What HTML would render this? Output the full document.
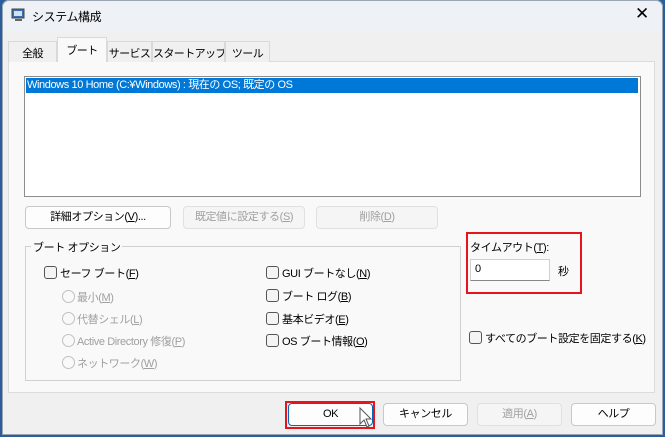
<!DOCTYPE html>
<html><head><meta charset="utf-8"><style>
*{box-sizing:border-box;margin:0;padding:0}
body{width:665px;height:437px;background:#2a5d9a;position:relative;overflow:hidden;font-family:"Liberation Sans","Noto Sans CJK JP",sans-serif;font-size:11px;letter-spacing:-0.4px;color:#000}
.win{position:absolute;left:2px;top:0;width:661px;height:435px;background:#f0f0f0;border-radius:7px 7px 0 0;box-shadow:inset 0 0 0 1px #9aa5b3}
.title{position:absolute;left:3px;top:1px;width:659px;height:31px;background:#eef2f6;border-radius:7px 7px 0 0}
.a{position:absolute;white-space:nowrap}
.panel{position:absolute;left:8px;top:61px;width:647px;height:332px;background:#f9f9f9;border:1px solid #dcdcdc}
.tab{position:absolute;top:41px;height:21px;border:1px solid #d9d9d9;border-bottom:none;background:#f0f0f0;padding:3px 0 0;text-align:center;white-space:nowrap;font-size:11px;letter-spacing:-0.6px;overflow:hidden}
.btn{position:absolute;height:23px;border:1px solid #c8c8c8;border-radius:4px;background:#fdfdfd;text-align:center;line-height:21px;white-space:nowrap}
.dis{color:#a0a0a0;background:#f5f5f5;border-color:#e0e0e0}
.cb{position:absolute;width:13px;height:13px;border:1px solid #555;border-radius:3px;background:#f4f4f4}
.rb{position:absolute;width:13px;height:13px;border:1px solid #c0c0c0;border-radius:50%}
.g{color:#a0a0a0}
u{text-decoration:underline}
</style></head><body>
<div class="win"></div>
<div class="title"></div>
<svg class="a" style="left:10px;top:7px" width="16" height="16" viewBox="0 0 16 16"><rect x="2" y="2" width="12" height="9" fill="#3a6fb0" stroke="#444"/><rect x="4" y="4" width="8" height="5" fill="#cfe3f7"/><rect x="5" y="12" width="7" height="2" fill="#666"/></svg>
<div class="a" style="left:32px;top:8px;font-size:12px">システム構成</div>
<div class="a" style="left:635px;top:4px;font-size:17px;font-weight:300">✕</div>
<div class="panel"></div>
<div class="tab" style="left:8px;width:49px">全般</div>
<div class="tab" style="left:57px;top:37px;height:25px;width:50px;background:#f9f9f9;padding-top:4px">ブート</div>
<div class="tab" style="left:107px;width:45px">サービス</div>
<div class="tab" style="left:152px;width:73px">スタートアップ</div>
<div class="tab" style="left:225px;width:45px">ツール</div>
<div class="a" style="left:24px;top:76px;width:617px;height:121px;background:#fff;border:1px solid #8c8c8c"></div>
<div class="a" style="left:26px;top:78px;width:612px;height:15px;background:#0078d7;color:#fff;padding-left:1px;line-height:15px">Windows 10 Home (C:¥Windows) : 現在の OS; 既定の OS</div>
<div class="btn" style="left:25px;top:206px;width:146px">詳細オプション(<u>V</u>)...</div>
<div class="btn dis" style="left:183px;top:206px;width:122px">既定値に設定する(<u>S</u>)</div>
<div class="btn dis" style="left:316px;top:206px;width:122px">削除(<u>D</u>)</div>
<div class="a" style="left:25px;top:246px;width:436px;height:135px;border:1px solid #d0d0d0"></div>
<div class="a" style="left:31px;top:239px;background:#f9f9f9;padding:0 2px">ブート オプション</div>
<div class="cb" style="left:44px;top:266px"></div><div class="a" style="left:60px;top:265px">セーフ ブート(<u>F</u>)</div>
<div class="rb" style="left:62px;top:290px"></div><div class="a g" style="left:77px;top:289px">最小(<u>M</u>)</div>
<div class="rb" style="left:62px;top:312px"></div><div class="a g" style="left:77px;top:311px">代替シェル(<u>L</u>)</div>
<div class="rb" style="left:62px;top:334px"></div><div class="a g" style="left:77px;top:333px">Active Directory 修復(<u>P</u>)</div>
<div class="rb" style="left:62px;top:356px"></div><div class="a g" style="left:77px;top:355px">ネットワーク(<u>W</u>)</div>
<div class="cb" style="left:266px;top:266px"></div><div class="a" style="left:282px;top:265px">GUI ブートなし(<u>N</u>)</div>
<div class="cb" style="left:266px;top:289px"></div><div class="a" style="left:282px;top:288px">ブート ログ(<u>B</u>)</div>
<div class="cb" style="left:266px;top:312px"></div><div class="a" style="left:282px;top:311px">基本ビデオ(<u>E</u>)</div>
<div class="cb" style="left:266px;top:334px"></div><div class="a" style="left:282px;top:333px">OS ブート情報(<u>O</u>)</div>
<div class="a" style="left:466px;top:232px;width:116px;height:62px;border:2px solid #e8141c"></div>
<div class="a" style="left:470px;top:239px">タイムアウト(<u>T</u>):</div>
<div class="a" style="left:470px;top:259px;width:80px;height:22px;background:#fff;border:1px solid #d0d0d0;border-bottom-color:#888;padding:3px 0 0 4px">0</div>
<div class="a" style="left:558px;top:263px">秒</div>
<div class="cb" style="left:469px;top:331px"></div><div class="a" style="left:485px;top:330px">すべてのブート設定を固定する(<u>K</u>)</div>
<div class="a" style="left:285px;top:401px;width:90px;height:28px;border:2px solid #e8141c"></div>
<div class="btn" style="left:288px;top:403px;width:85px;border:1px solid #0067c0">OK</div>
<svg class="a" style="left:359px;top:407px" width="14" height="22" viewBox="0 0 14 22"><path d="M1 1 L1 17 L5 13 L8 20 L10 19 L7 12 L12 12 Z" fill="#fff" stroke="#555"/></svg>
<div class="btn" style="left:383px;top:403px;width:85px">キャンセル</div>
<div class="btn dis" style="left:477px;top:403px;width:85px">適用(<u>A</u>)</div>
<div class="btn" style="left:571px;top:403px;width:85px">ヘルプ</div>
</body></html>
